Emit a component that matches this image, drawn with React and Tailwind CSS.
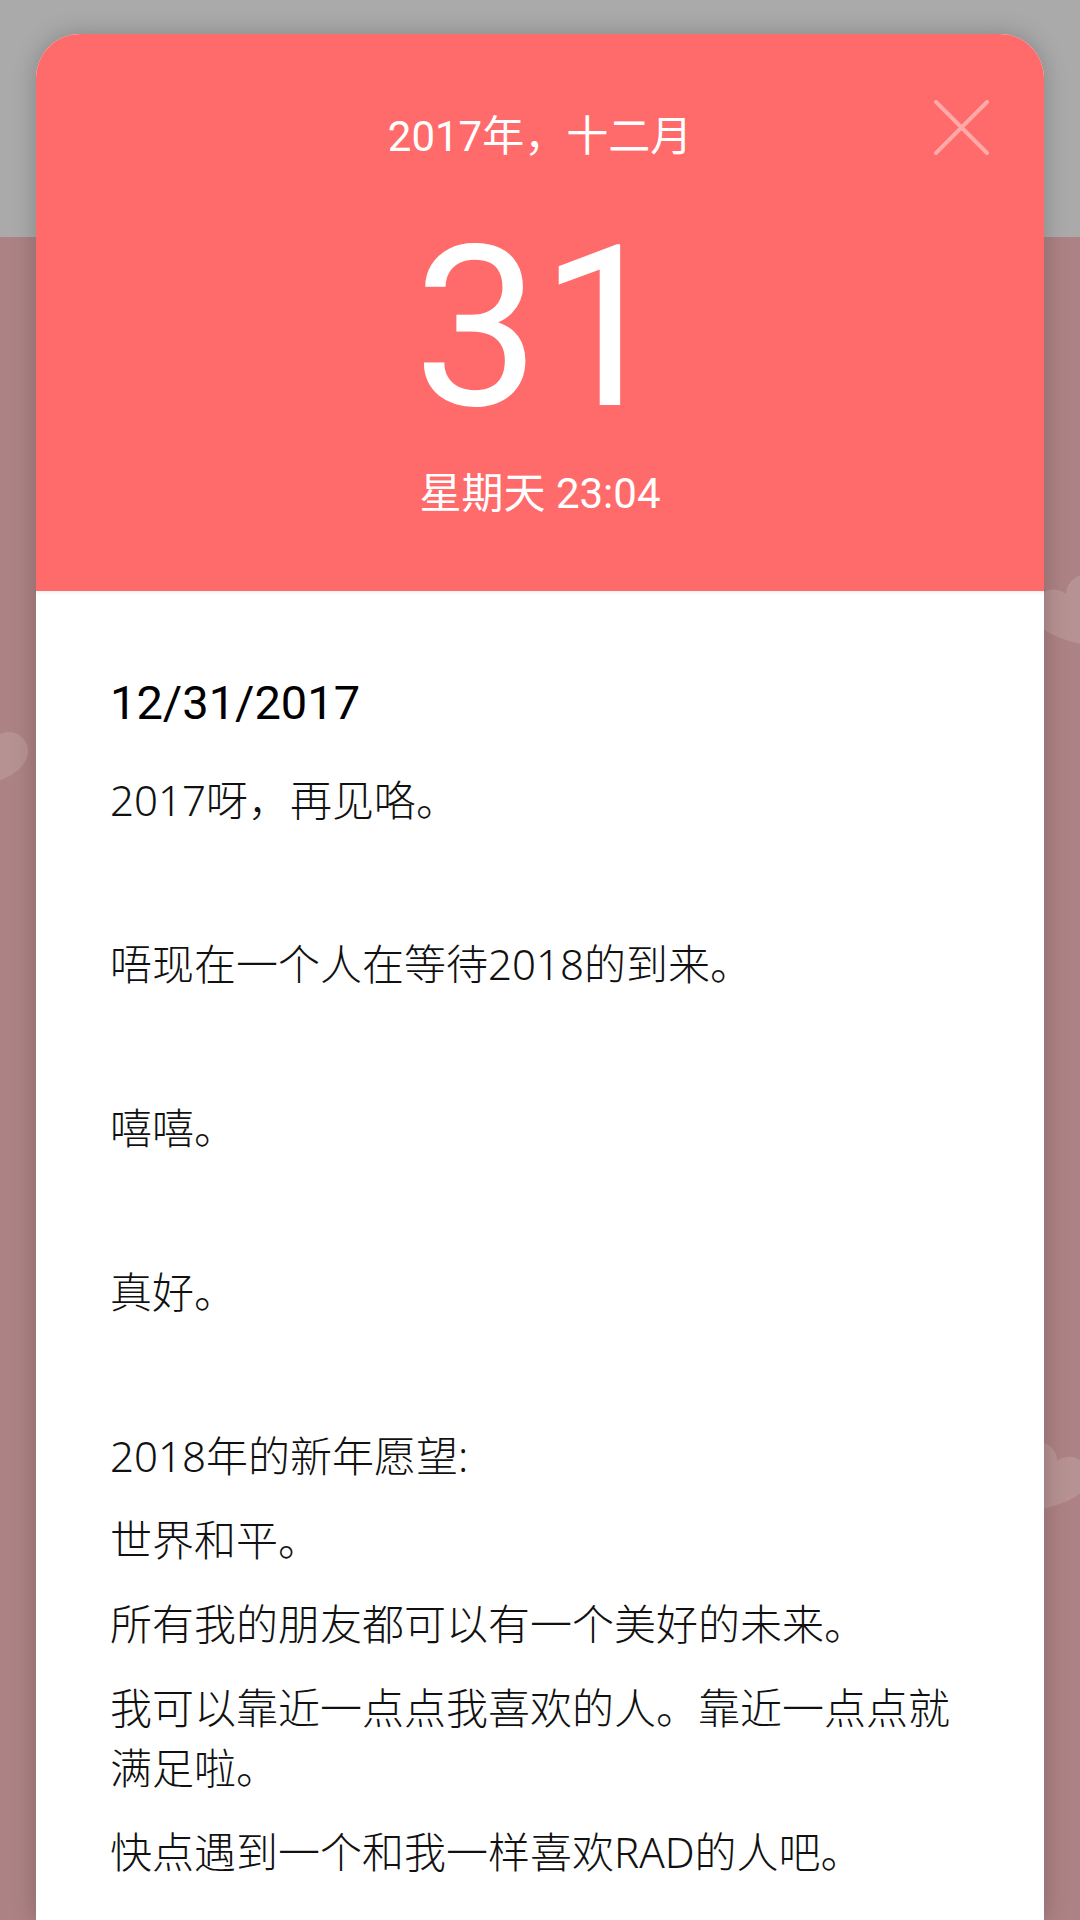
import React from "react";

const Heart = ({ className }) => (
  <svg viewBox="0 0 100 90" className={className}>
    <path
      d="M50 88 C20 65 2 48 2 27 C2 12 14 2 28 2 C38 2 46 8 50 16 C54 8 62 2 72 2 C86 2 98 12 98 27 C98 48 80 65 50 88 Z"
      fill="rgba(255,255,255,0.13)"
    />
  </svg>
);

const lines = [
  { t: "2017呀，再见咯。" },
  { blank: true },
  { t: "唔现在一个人在等待2018的到来。" },
  { blank: true },
  { t: "嘻嘻。" },
  { blank: true },
  { t: "真好。" },
  { blank: true },
  { t: "2018年的新年愿望:" },
  { t: "世界和平。" },
  { t: "所有我的朋友都可以有一个美好的未来。" },
  { t: "我可以靠近一点点我喜欢的人。靠近一点点就满足啦。" },
  { t: "快点遇到一个和我一样喜欢RAD的人吧。" },
];

export default function App() {
  return (
    <div className="relative w-[1080px] h-[1920px] overflow-hidden">
      {/* backdrop */}
      <div className="flex flex-col h-full">
        <div className="h-[237px] bg-[#aaaaaa]" />
        <div className="relative flex-1 bg-[#ad8284]">
          <Heart className="absolute left-[-50px] top-[485px] w-[76px] h-[72px] rotate-[20deg]" />
          <Heart className="absolute left-[1036px] top-[340px] w-[80px] h-[76px] rotate-[-25deg]" />
          <Heart className="absolute left-[1010px] top-[1208px] w-[76px] h-[72px] rotate-[25deg]" />
        </div>
      </div>

      {/* dialog card */}
      <div className="absolute left-[36px] top-[34px] bottom-0 w-[1008px] rounded-t-[44px] overflow-hidden bg-white shadow-[0_0_24px_rgba(0,0,0,0.22)] flex flex-col">
        <div
          className="relative h-[557px] shrink-0 bg-[#ff6b6b] flex flex-col items-center text-white shadow-[0_2px_3px_rgba(0,0,0,0.06)]"
          style={{ fontFamily: 'Roboto, "Noto Sans CJK SC", sans-serif' }}
        >
          <div className="mt-[75px] text-[42px] leading-[56px]">2017年，十二月</div>
          <div className="mt-[51px] text-[225px] leading-[225px]">31</div>
          <div className="mt-[26px] text-[42px] leading-[54px]">星期天 23:04</div>
          <button className="absolute top-[66px] right-[55px] w-[55px] h-[55px]">
            <svg viewBox="0 0 55 55" className="w-[55px] h-[55px]">
              <path
                d="M2 2 L53 53 M53 2 L2 53"
                stroke="rgba(255,255,255,0.42)"
                strokeWidth="4"
                strokeLinecap="square"
                fill="none"
              />
            </svg>
          </button>
        </div>

        <div className="flex-1 pl-[74px] pr-[74px] pt-[80px] text-[#111]">
          <div
            className="text-[47px] leading-[64px] text-black"
            style={{ fontFamily: 'Roboto, "Noto Sans CJK SC", sans-serif' }}
          >
            12/31/2017
          </div>
          <div
            className="mt-[35px] text-[42px] leading-[60px] font-light"
            style={{ fontFamily: '"Noto Sans", "Noto Sans CJK SC", sans-serif' }}
          >
            {lines.map((l, i) =>
              l.blank ? (
                <div key={i} className="h-[80px]" />
              ) : (
                <p key={i} className="mb-[24px]">
                  {l.t}
                </p>
              )
            )}
          </div>
        </div>
      </div>
    </div>
  );
}
